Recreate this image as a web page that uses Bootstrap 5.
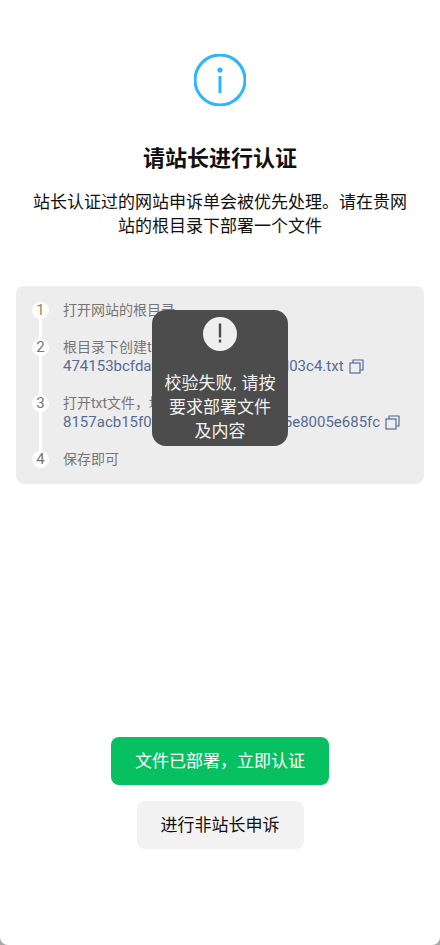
<!DOCTYPE html>
<html lang="zh-CN">

<head>
    <meta charset="UTF-8" />
    <meta name="viewport" content="width=device-width, initial-scale=1" />
    <title>请站长进行认证</title>
    <link href="https://cdn.jsdelivr.net/npm/bootstrap@5.3.0/dist/css/bootstrap.min.css" rel="stylesheet">
    <style>
        body {
            font-family: "Open Sans", "Noto Sans CJK SC", sans-serif;
            background: #a8a8a8;
            color: #111;
        }

        .page-wrap {
            height: 945px;
            padding: 54px 16px 0;
            background: #fff;
            border-radius: 0 0 8px 8px;
        }

        .info-icon {
            width: 52px;
            height: 52px;
        }

        .page-title {
            font-size: 22px;
            line-height: 28px;
            font-weight: 700;
            margin: 37px 0 19px;
            color: #111;
        }

        .page-desc {
            font-size: 17px;
            line-height: 24px;
            margin: 0 0 48px;
            color: #111;
        }

        .steps-box {
            height: 198px;
            background: #ededed;
            border-radius: 8px;
            padding: 15px 16px 14px;
            font-family: Roboto, "Noto Sans CJK SC", sans-serif;
            font-size: 14px;
            line-height: 19px;
            color: #767676;
        }

        .step-row {
            position: relative;
            padding-bottom: 18px;
        }

        .step-row:last-child {
            padding-bottom: 0;
        }

        .step-row:not(:last-child)::before {
            content: "";
            position: absolute;
            left: 7px;
            top: 10px;
            bottom: -10px;
            width: 3px;
            background: #fff;
        }

        .step-num {
            position: relative;
            flex: 0 0 17px;
            width: 17px;
            height: 17px;
            margin: 1px 14px 0 0;
            border-radius: 50%;
            background: #fff;
            text-align: center;
            font-size: 15px;
            line-height: 17px;
        }

        .step-num-first {
            color: #8f8a5c;
        }

        .file-link {
            color: #576b95;
            font-size: 15px;
        }

        .copy-icon {
            width: 15px;
            height: 15px;
            margin-left: 2px;
            vertical-align: -3px;
        }

        .toast-box {
            position: absolute;
            left: 152px;
            top: 310px;
            width: 136px;
            height: 136px;
            background: #4c4c4c;
            border-radius: 14px;
            padding: 7px 12px 0;
            color: #f2f2f2;
            font-size: 17px;
            line-height: 24px;
            text-align: center;
        }

        .toast-icon {
            width: 34px;
            height: 34px;
            margin-bottom: 20px;
        }

        .actions {
            margin-top: 253px;
        }

        .btn-verify,
        .btn-other {
            height: 48px;
            font-size: 17px;
            line-height: 24px;
            padding: 12px 24px;
            border: 0;
            border-radius: 8px;
        }

        .btn-verify {
            background: #07c160;
            color: #fff;
        }

        .btn-other {
            background: #f2f2f2;
            color: #111;
        }
    </style>
</head>

<body>
    <div class="page-wrap position-relative text-center">
        <svg class="info-icon d-block mx-auto" viewBox="0 0 52 52" fill="none">
            <circle cx="26" cy="26" r="25" stroke="#2db5ff" stroke-width="3" />
            <circle cx="26" cy="16" r="2.6" fill="#2db5ff" />
            <rect x="24.5" y="22" width="3" height="17" fill="#2db5ff" />
        </svg>
        <h1 class="page-title">请站长进行认证</h1>
        <p class="page-desc px-3">站长认证过的网站申诉单会被优先处理。请在贵网站的根目录下部署一个文件</p>

        <div class="steps-box text-start">
            <div class="step-row d-flex">
                <div class="step-num step-num-first">1</div>
                <div>打开网站的根目录</div>
            </div>
            <div class="step-row d-flex">
                <div class="step-num">2</div>
                <div>根目录下创建txt文件，文件名为<br>
                    <span class="file-link">474153bcfda8e06c2cc1a95f4d8d03c4.txt</span>
                    <svg class="copy-icon" viewBox="0 0 15 15" fill="none" stroke="#576b95" stroke-width="1.2">
                        <rect x="1" y="4" width="10" height="10" />
                        <path d="M4 4V1h10v10h-3" />
                    </svg>
                </div>
            </div>
            <div class="step-row d-flex">
                <div class="step-num">3</div>
                <div>打开txt文件，填写内容<br>
                    <span class="file-link">8157acb15f0f2c94d7ab36e1fa1f5e8005e685fc</span>
                    <svg class="copy-icon" viewBox="0 0 15 15" fill="none" stroke="#576b95" stroke-width="1.2">
                        <rect x="1" y="4" width="10" height="10" />
                        <path d="M4 4V1h10v10h-3" />
                    </svg>
                </div>
            </div>
            <div class="step-row d-flex">
                <div class="step-num">4</div>
                <div>保存即可</div>
            </div>
        </div>

        <div class="actions d-flex flex-column align-items-center gap-3">
            <button class="btn btn-verify" type="button">文件已部署，立即认证</button>
            <button class="btn btn-other" type="button">进行非站长申诉</button>
        </div>

        <div class="toast-box">
            <svg class="toast-icon d-block mx-auto" viewBox="0 0 34 34">
                <circle cx="17" cy="17" r="17" fill="#efefef" />
                <rect x="15.8" y="6.5" width="2.4" height="14" fill="#4c4c4c" />
                <rect x="15.8" y="22.5" width="2.4" height="3" fill="#4c4c4c" />
            </svg>
            校验失败, 请按要求部署文件及内容
        </div>
    </div>

    <script src="https://cdn.jsdelivr.net/npm/bootstrap@5.3.0/dist/js/bootstrap.bundle.min.js"></script>
</body>

</html>
